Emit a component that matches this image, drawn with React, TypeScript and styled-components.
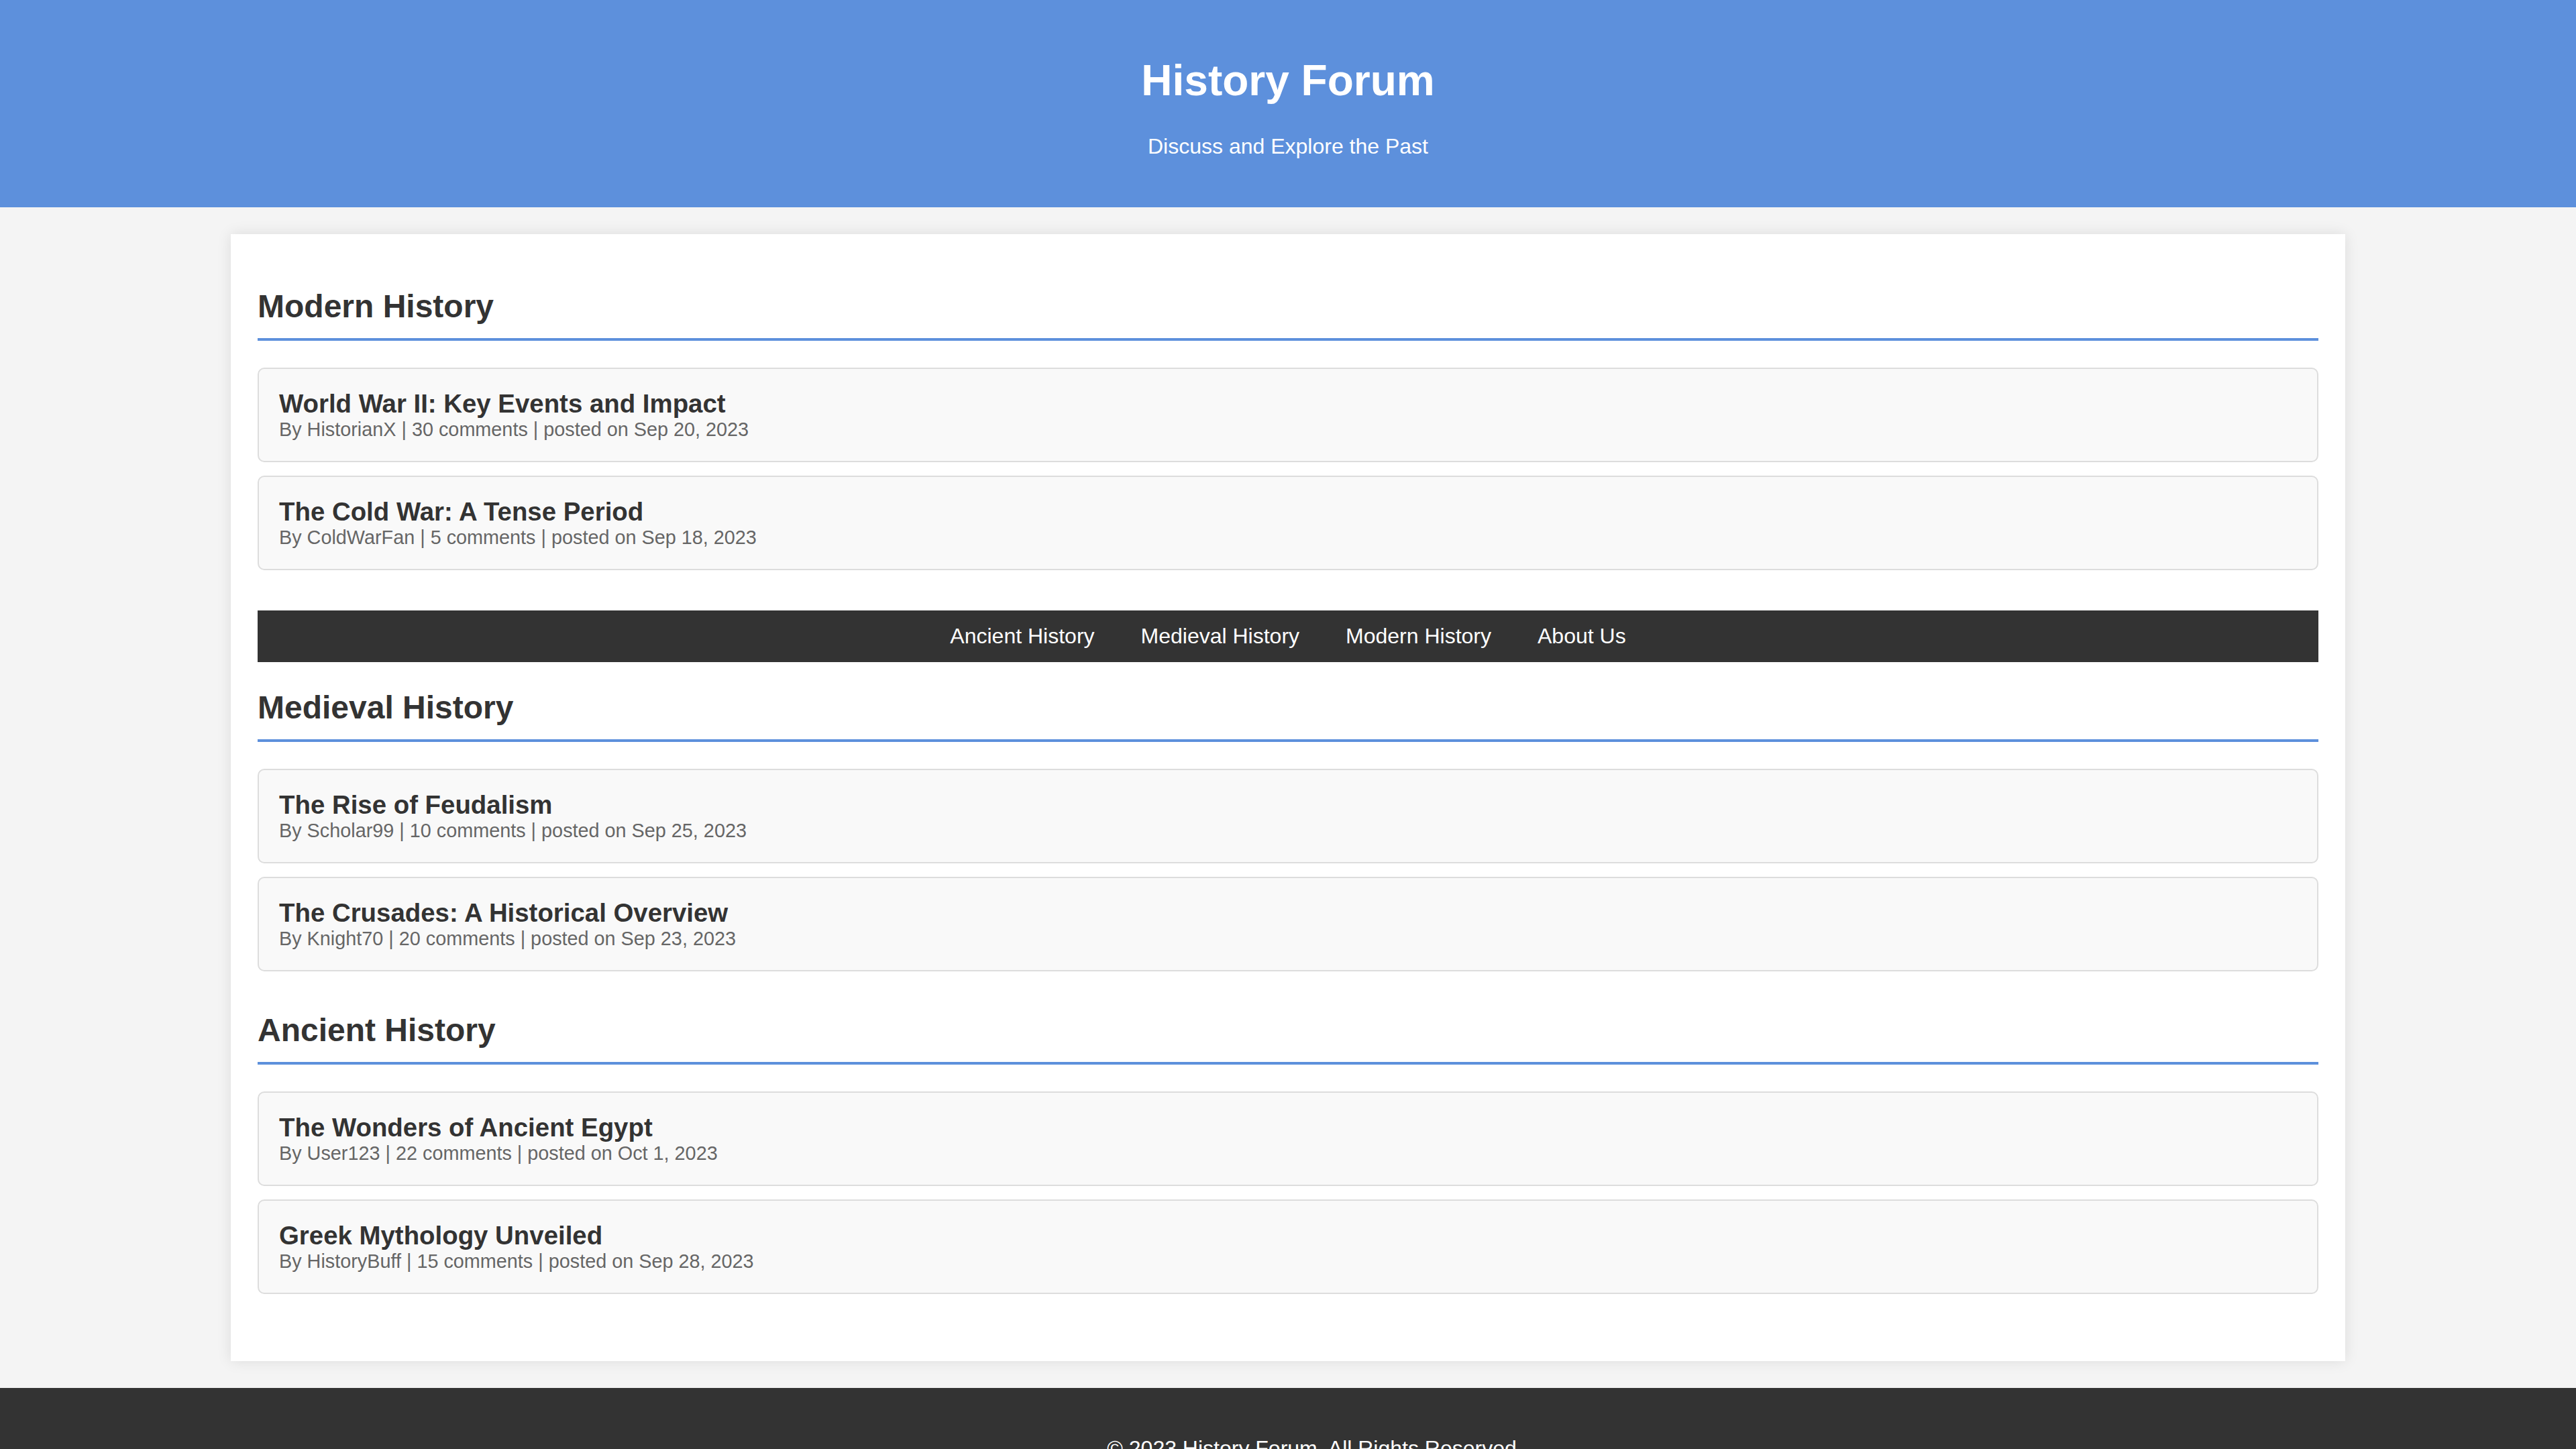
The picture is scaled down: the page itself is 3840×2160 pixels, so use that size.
import React from "react";
import styled, { createGlobalStyle } from "styled-components";

const GlobalStyle = createGlobalStyle`
  html, body {
    margin: 0;
    padding: 0;
  }
  body {
    font-family: "Liberation Sans", Arial, Helvetica, sans-serif;
    background: #f4f4f4;
    color: #333;
  }
`;

const Header = styled.header`
  background: #5d90dc;
  color: #ffffff;
  padding: 40px;
  text-align: center;
`;

const SiteTitle = styled.h1`
  font-size: 64px;
  font-weight: bold;
  margin: 42.88px 0;
`;

const Tagline = styled.p`
  font-size: 32px;
  margin: 32px 0;
`;

const Container = styled.main`
  width: 80%;
  margin: 40px auto;
  padding: 40px 40px 80px;
  background: #ffffff;
  box-shadow: 0 0 20px rgba(0, 0, 0, 0.1);
  display: flex;
  flex-direction: column;
`;

const Section = styled.section`
  display: flex;
  flex-direction: column;
`;

const SectionTitle = styled.h2`
  font-size: 48px;
  font-weight: bold;
  color: #333;
  margin: 40px 0 40px;
  padding-bottom: 20px;
  border-bottom: 4px solid #5d90dc;
`;

const Card = styled.article`
  background: #f9f9f9;
  border: 2px solid #dddddd;
  border-radius: 10px;
  padding: 30px;
  margin-bottom: 20px;
`;

const CardTitle = styled.h3`
  font-size: 38.4px;
  font-weight: bold;
  color: #333;
  margin: 0;
`;

const Meta = styled.p`
  font-size: 28.8px;
  color: #666;
  margin: 0;
`;

const Nav = styled.nav`
  background: #333333;
  padding: 20px 0;
  margin-top: 40px;
  display: flex;
  justify-content: center;
  gap: 69px;
`;

const NavLink = styled.a`
  color: #ffffff;
  font-size: 32px;
  text-decoration: none;
  cursor: pointer;
`;

const Footer = styled.footer`
  background: #333333;
  color: #ffffff;
  text-align: center;
  padding: 40px 0 40px 80px;
`;

const FooterText = styled.p`
  font-size: 32px;
  margin: 32px 0;
`;

type Post = { title: string; author: string; comments: number; date: string };

const modern: Post[] = [
  { title: "World War II: Key Events and Impact", author: "HistorianX", comments: 30, date: "Sep 20, 2023" },
  { title: "The Cold War: A Tense Period", author: "ColdWarFan", comments: 5, date: "Sep 18, 2023" },
];
const medieval: Post[] = [
  { title: "The Rise of Feudalism", author: "Scholar99", comments: 10, date: "Sep 25, 2023" },
  { title: "The Crusades: A Historical Overview", author: "Knight70", comments: 20, date: "Sep 23, 2023" },
];
const ancient: Post[] = [
  { title: "The Wonders of Ancient Egypt", author: "User123", comments: 22, date: "Oct 1, 2023" },
  { title: "Greek Mythology Unveiled", author: "HistoryBuff", comments: 15, date: "Sep 28, 2023" },
];

const PostCard = ({ post }: { post: Post }) => (
  <Card>
    <CardTitle>{post.title}</CardTitle>
    <Meta>
      By {post.author} | {post.comments} comments | posted on {post.date}
    </Meta>
  </Card>
);

const ForumSection = ({ title, posts }: { title: string; posts: Post[] }) => (
  <Section>
    <SectionTitle>{title}</SectionTitle>
    {posts.map((p) => (
      <PostCard key={p.title} post={p} />
    ))}
  </Section>
);

export default function App() {
  return (
    <>
      <GlobalStyle />
      <Header>
        <SiteTitle>History Forum</SiteTitle>
        <Tagline>Discuss and Explore the Past</Tagline>
      </Header>
      <Container>
        <ForumSection title="Modern History" posts={modern} />
        <Nav>
          <NavLink>Ancient History</NavLink>
          <NavLink>Medieval History</NavLink>
          <NavLink>Modern History</NavLink>
          <NavLink>About Us</NavLink>
        </Nav>
        <ForumSection title="Medieval History" posts={medieval} />
        <ForumSection title="Ancient History" posts={ancient} />
      </Container>
      <Footer>
        <FooterText>© 2023 History Forum. All Rights Reserved.</FooterText>
      </Footer>
    </>
  );
}
